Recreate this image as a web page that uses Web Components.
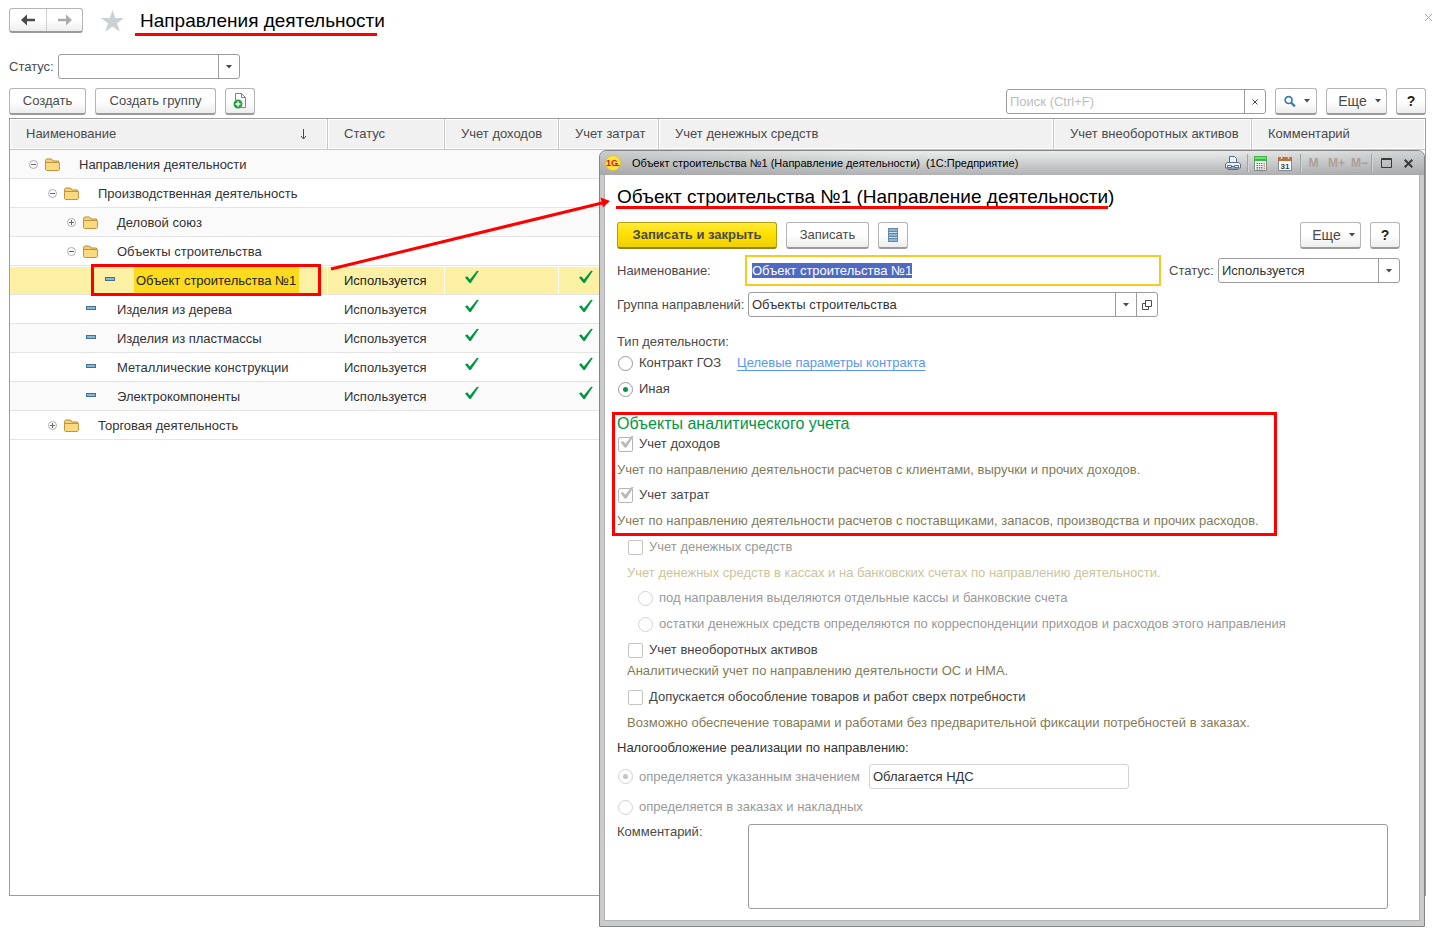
<!DOCTYPE html>
<html lang="ru">
<head>
<meta charset="utf-8">
<meta name="viewport" content="width=device-width, initial-scale=1">
<title>Направления деятельности</title>
<style>
  body { margin: 0; background: #fff; color: #4a4a4a; font: 13px/16px "Liberation Sans", Arial, sans-serif; }
</style>
</head>
<body>
<activity-page></activity-page>

<script>
const BASE = `
  *, *::before, *::after { box-sizing: border-box; }
  button, input, select, textarea { font: inherit; color: inherit; margin: 0; }
  svg { display: block; }
`;

function define(name, render, ready) {
  customElements.define(name, class extends HTMLElement {
    connectedCallback() {
      if (this.shadowRoot) return;
      const root = this.attachShadow({ mode: 'open' });
      const template = document.createElement('template');
      template.innerHTML = `<style>${BASE}</style>` + render(this);
      root.append(template.content.cloneNode(true));
      if (ready) ready(this, root);
    }
  });
}

const CARET = '<svg class="caret" width="6" height="4" viewBox="0 0 6 4"><path d="M0 0h6L3 3.5z" fill="#4a4a4a"/></svg>';

/* Push button: plain, primary (yellow), square icon or drop-down menu */
define('ui-button', el => `
  <style>
    :host { display: block; flex: none; }
    button {
      display: flex; align-items: center; justify-content: center; gap: 8px;
      height: 27px; min-width: 30px; width: 100%; padding: 0 12px;
      border: 1px solid #b4b4b4; border-bottom: 2px solid #9a9a9a; border-radius: 3px;
      background: linear-gradient(#fff 50%, #ededed); white-space: nowrap;
    }
    .caret { flex: none; }
    :host([primary]) button {
      background: linear-gradient(#ffea3d, #ffe000 45%, #efd000); border-color: #b39d10 #b39d10 #93820f;
      font-weight: bold;
    }
    :host([square]) button { padding: 0; width: 30px; }
    :host([menu]) button { padding: 0 6px 0 12px; }
    :host([menu]:not([icon])) button { font-size: 14px; }
    :host([icon]) button { padding: 0 6px 0 8px; width: 42px; }
    :host([help]) button { font-size: 14px; font-weight: bold; color: #222; }
  </style>
  <button type="button" aria-label="${el.getAttribute('name') || ''}"><slot></slot>${el.hasAttribute('menu') ? CARET : ''}</button>
`, (el, root) => { if (!el.hasAttribute('name')) root.querySelector('button').removeAttribute('aria-label'); });

/* Labelled drop-down list, optionally with an "open" button */
define('ui-select', el => `
  <style>
    :host { display: flex; align-items: center; }
    label { flex: none; width: var(--label, 49px); white-space: nowrap; }
    .box { flex: 1; min-width: 0; display: flex; height: 25px; border: 1px solid #9c9c9c; border-radius: 3px; background: #fff; position: relative; }
    select { flex: 1; min-width: 0; appearance: none; border: 0; background: none; padding: 0 24px 0 3px; color: #333; outline: 0; }
    .arrow { position: absolute; top: 0; bottom: 0; right: ${el.hasAttribute('openable') ? 21 : 0}px; width: 21px; border-left: 1px solid #9c9c9c; display: grid; place-items: center; pointer-events: none; }
    button { flex: none; width: 21px; border: 0; border-left: 1px solid #9c9c9c; background: none; padding: 0; display: grid; place-items: center; }
  </style>
  <label for="s">${el.getAttribute('label')}</label>
  <div class="box">
    <select id="s"><option>${el.getAttribute('value') || ''}</option></select>
    <span class="arrow">${CARET}</span>
    ${el.hasAttribute('openable') ? `<button type="button" aria-label="Открыть"><svg width="10" height="10" viewBox="0 0 10 10" fill="none" stroke="#4a4a4a"><path d="M3.500 .5h6v6h-6zM3.500 3.500h-3v6h6v-3"/></svg></button>` : ''}
  </div>
`);

/* Labelled text box; "current" gives it the yellow frame and selects its text */
define('ui-field', el => `
  <style>
    :host { display: flex; align-items: center; }
    label { flex: none; width: var(--label, 131px); white-space: nowrap; }
    input { flex: 1; min-width: 0; height: 25px; border: 1px solid #9c9c9c; border-radius: 3px; padding: 0 3px; background: #fff; color: #333; outline: 0; }
    :host([current]) input { border-color: #fff; border-radius: 0; outline: 2px solid #f9c922; outline-offset: 1px; }
    :host([readonly]) input { border-color: #d2d2d2; }
    input::selection { background: #5069c3; color: #fff; }
  </style>
  ${el.hasAttribute('label') ? `<label for="f">${el.getAttribute('label')}</label>` : ''}
  <input id="f" type="text" value="${el.getAttribute('value') || ''}" ${el.hasAttribute('readonly') ? 'readonly aria-label="Значение"' : ''}>
`, (el, root) => {
  if (el.hasAttribute('current')) { const i = root.querySelector('input'); i.focus(); i.select(); }
});

/* Search box with a clear button */
define('ui-search', () => `
  <style>
    :host { display: flex; width: 260px; height: 25px; border: 1px solid #9c9c9c; border-radius: 3px; background: #fff; box-sizing: border-box; }
    input { flex: 1; min-width: 0; border: 0; background: none; padding: 0 3px; outline: 0; }
    input::placeholder { color: #bdbdbd; opacity: 1; }
    button { width: 21px; border: 0; border-left: 1px solid #9c9c9c; background: none; padding: 0; display: grid; place-items: center; }
  </style>
  <input type="text" placeholder="Поиск (Ctrl+F)" aria-label="Поиск">
  <button type="button" aria-label="Очистить"><svg width="6" height="6" viewBox="0 0 6 6" stroke="#4a4a4a"><path d="M.5.5l5 5M5.500.5l-5 5"/></svg></button>
`);

/* Tick box or radio button with its label */
define('ui-choice', el => `
  <style>
    :host { display: block; height: 22px; }
    label { display: inline-flex; align-items: center; gap: 6px; height: 22px; padding-left: 1px; white-space: nowrap; color: #444; }
    input { appearance: none; flex: none; width: 15px; height: 15px; border: 1px solid #c4c4c4; border-radius: 2px; background: #fff; display: grid; place-items: center; position: relative; opacity: 1; }
    input[type=radio] { border-radius: 50%; border-color: #999; }
    input[type=radio]:checked::before { content: ""; width: 5px; height: 5px; border-radius: 50%; background: #009646; }
    input[type=checkbox]:checked { border-color: #b5b5b5; }
    input[type=checkbox]:checked::before {
      content: ""; position: absolute; left: 1px; top: -2px; width: 14px; height: 13px; background: #b9b9b9;
      clip-path: polygon(4% 50%, 22% 42%, 38% 64%, 84% 2%, 100% 0, 46% 92%, 32% 92%);
    }
    :host([off]) label { color: #999; }
    :host([off]) input[type=radio] { border-color: #d2d2d2; }
    :host([off]) input[type=radio]:checked::before { background: #c4c4c4; }
  </style>
  <label><input type="${el.getAttribute('type')}" ${el.hasAttribute('checked') ? 'checked' : ''} ${el.hasAttribute('off') ? 'disabled' : ''}><slot></slot></label>
`);

/* Grey-brown hint under an option */
define('ui-hint', () => `
  <style>
    :host { display: block; line-height: 29px; color: #837b58; white-space: nowrap; }
    :host([faint]) { color: #cbc49c; }
    :host([tight]) { line-height: 20px; margin-bottom: 5px; }
  </style><slot></slot>
`);

/* Top line: history buttons, star, page title */
define('page-header', () => `
  <style>
    :host { display: flex; align-items: flex-start; height: 46px; margin-right: -7px; }
    .nav { display: flex; height: 25px; border: 1px solid #b4b4b4; border-bottom: 2px solid #9a9a9a; border-radius: 3px; background: linear-gradient(#fff 50%, #ededed); }
    .nav button { width: 36px; border: 0; background: none; padding: 0; display: grid; place-items: center; }
    .nav button + button { border-left: 1px solid #cfcfcf; }
    .star { margin: 2px 16px 0 18px; border: 0; background: none; padding: 0; }
    h1 { margin: 0; font-size: 19px; line-height: 26px; font-weight: normal; color: #000; position: relative; white-space: nowrap; }
    h1::after { content: ""; position: absolute; left: -5px; right: 8px; bottom: -2px; height: 3px; background: #f00; }
    .close { margin: 5px 0 0 auto; border: 0; background: none; padding: 0; }
  </style>
  <div class="nav">
    <button type="button" aria-label="Назад"><svg width="14" height="12" viewBox="0 0 14 12"><path d="M0 6l6-5.500v4.200h8v2.600H6v4.200z" fill="#4a4a4a"/></svg></button>
    <button type="button" aria-label="Вперед"><svg width="14" height="12" viewBox="0 0 14 12"><path d="M14 6L8 .5v4.200H0v2.600h8v4.200z" fill="#ababab"/></svg></button>
  </div>
  <button type="button" class="star" aria-label="Избранное"><svg width="23" height="22" viewBox="0 0 23 22"><path d="M11.500 0l2.800 8H23l-7 5.200 2.700 8.500-7.200-5.200-7.200 5.200L7 13.200 0 8h8.700z" fill="#cdd0d3"/></svg></button>
  <h1>Направления деятельности</h1>
  <button type="button" class="close" aria-label="Закрыть"><svg width="9" height="9" viewBox="0 0 9 9" stroke="#aaa"><path d="M1 1l7 7M8 1L1 8"/></svg></button>
`);

define('page-toolbar', () => `
  <style>
    :host { display: flex; gap: 9px; margin: 9px 0 3px; }
    ui-search { margin-left: auto; align-self: center; }
    .w1 { width: 77px; } .w2 { width: 121px; } .w3 { width: 61px; }
  </style>
  <ui-button class="w1">Создать</ui-button>
  <ui-button class="w2">Создать группу</ui-button>
  <ui-button square name="Создать копированием"><svg width="14" height="16" viewBox="0 0 14 16"><path d="M2.500 7V.5h6l4 4v10H8M8.500.5v4h4" fill="#fff" stroke="#75849a"/><circle cx="5" cy="11" r="4.500" fill="#28a03c"/><path d="M5 8.500v5M2.500 11h5" stroke="#fff" stroke-width="1.500"/></svg></ui-button>
  <ui-search></ui-search>
  <ui-button menu icon name="Найти"><svg width="13" height="13" viewBox="0 0 13 13" fill="none" stroke="#3579b1"><circle cx="5" cy="5" r="3.700" stroke-width="1.800"/><path d="M7.800 7.800l4 4" stroke-width="2.400"/></svg></ui-button>
  <ui-button menu class="w3">Еще</ui-button>
  <ui-button square help>?</ui-button>
`);

/* Tree table of business activities */
const ROWS = [
  [1, 'minus', 'Направления деятельности'],
  [2, 'minus', 'Производственная деятельность'],
  [3, 'plus', 'Деловой союз'],
  [3, 'minus', 'Объекты строительства'],
  [4, 'leaf', 'Объект строительства №1', true],
  [3, 'leaf', 'Изделия из дерева'],
  [3, 'leaf', 'Изделия из пластмассы'],
  [3, 'leaf', 'Металлические конструкции'],
  [3, 'leaf', 'Электрокомпоненты'],
  [2, 'plus', 'Торговая деятельность'],
];
const TICK = '<svg width="14" height="14" viewBox="0 0 14 14" role="img" aria-label="Да"><path d="M0 7.500l2.200-1.300 2.700 3.300L12 .8l1.800.2L5.800 13H4.500z" fill="#00963f"/></svg>';
const FOLDER = '<svg class="folder" width="15" height="13" viewBox="0 0 15 13"><path d="M.5 11.500v-9l1-1.500h5l1.500 2h5.500v8.500z" fill="#f3d273" stroke="#b98d35"/><path d="M.5 4.500h13.900v7l-1 1h-12l-.9-1z" fill="#f9da80" stroke="#c1933c"/></svg>';
const toggle = kind => `<button type="button" aria-label="${kind === 'plus' ? 'Развернуть' : 'Свернуть'}"><svg width="9" height="9" viewBox="0 0 9 9" fill="none"><circle cx="4.500" cy="4.500" r="4" stroke="#adadad"/><path d="M2 4.500h5${kind === 'plus' ? 'M4.500 2v5' : ''}" stroke="#666"/></svg></button>`;

define('activity-grid', () => `
  <style>
    :host { display: block; }
    table { width: 100%; border-collapse: separate; border-spacing: 0; table-layout: fixed; }
    th { height: 31px; padding: 0 16px; background: #f1f1f1; border-right: 1px solid #c6c6c6; border-bottom: 1px solid #c6c6c6; box-shadow: inset 0 0 0 1px #fff; text-align: left; font-weight: normal; white-space: nowrap; }
    th:last-child { border-right: 0; }
    th:first-child { padding-right: 20px; }
    .sorted { display: flex; justify-content: space-between; align-items: center; }
    td { height: 29px; padding: 2px 16px 0; border-bottom: 1px solid #e4e4e4; color: #333; white-space: nowrap; }
    tr:nth-child(odd) td { background: #fafafa; }
    td svg[role] { margin-top: -8px; }
    td:nth-child(n+3) { padding-left: 20px; }
    td:first-child { padding: 0 0 0 calc(19px + 19px * var(--n)); }
    .c1 { width: 318px; } .c2 { width: 117px; } .c3 { width: 114px; } .c4 { width: 100px; } .c5 { width: 395px; } .c6 { width: 198px; }
    .node { display: flex; align-items: center; height: 28px; position: relative; }
    .node button, .gap { flex: none; width: 9px; height: 10px; border: 0; background: none; padding: 0; margin-right: 7px; }
    .folder { flex: none; margin-right: 19px; }
    .dash { flex: none; width: 10px; height: 4px; border: 1px solid #44708f; background: #86b6d8; margin: 0 21px 2px 3px; }
    .name { line-height: 26px; padding-top: 1px; }
    tr.on td { background: #fcf0a5; box-shadow: inset -1px 0 #fff, inset 0 1px #fff; color: #222; }
    .on .name { background: #fcdb1f; padding: 1px 3px 0 2px; margin-left: -2px; }
    .on .node::after { content: ""; position: absolute; left: 5px; top: -2px; width: 230px; height: 32px; border: 3px solid #f00; }
  </style>
  <table>
    <colgroup><col class="c1"><col class="c2"><col class="c3"><col class="c4"><col class="c5"><col class="c6"><col></colgroup>
    <thead><tr>
      <th><span class="sorted">Наименование <svg width="7" height="11" viewBox="0 0 7 11" fill="none" stroke="#4a4a4a"><path d="M3.500 0v10M1 7l2.500 3L6 7"/></svg></span></th>
      <th>Статус</th><th>Учет доходов</th><th>Учет затрат</th><th>Учет денежных средств</th><th>Учет внеоборотных активов</th><th>Комментарий</th>
    </tr></thead>
    <tbody>${ROWS.map(([n, kind, name, on]) => `
      <tr class="${on ? 'on' : ''}">
        <td style="--n:${n - 1}"><div class="node">${kind === 'leaf' ? '<span class="gap"></span><span class="dash"></span>' : toggle(kind) + FOLDER}<span class="name">${name}</span></div></td>
        ${kind === 'leaf' ? `<td>Используется</td><td>${TICK}</td><td>${TICK}</td>` : '<td></td><td></td><td></td>'}<td></td><td></td><td></td>
      </tr>`).join('')}
    </tbody>
  </table>
`);

/* Window frame with caption and system buttons */
define('app-window', el => `
  <style>
    :host { display: block; border: 1px solid #858585; border-radius: 7px 7px 0 0; background: #cacbcc; padding: 0 5px 5px; }
    header {
      display: flex; align-items: center; height: 24px; margin: 0 -5px; padding: 0 10px 0 5px; border-radius: 6px 6px 0 0; color: #000;
      background: linear-gradient(90deg, #9a9b9d66, #fff0 35%, #fff0 75%, #9a9b9d55), linear-gradient(#ececec, #b0b1b3);
    }
    h2 { flex: 1; margin: 0 0 0 11px; font-size: 11px; line-height: 16px; font-weight: normal; white-space: pre; }
    .tools { display: flex; align-items: center; height: 20px; }
    button { border: 0; background: none; padding: 0; display: grid; place-items: center; height: 18px; font-size: 12px; font-weight: bold; color: #ada099; white-space: nowrap; }
    .sep { width: 2px; height: 18px; background: #a2a3a5; border-right: 1px solid #d4d4d4; }
    .body { background: #fff; border: 1px solid #b3b4b6; border-width: 0 1px 1px; margin: 0 -1px; }
    .print { width: 16px; margin-right: 6px; } .calc { width: 13px; margin: 0 11px 0 5px; } .cal { width: 14px; margin-right: 8px; }
    .m { width: 23px; } .max { width: 11px; margin: 0 11px 0 8px; } .x { width: 11px; }
  </style>
  <header>
    <svg width="16" height="16" viewBox="0 0 16 16"><circle cx="8" cy="8" r="7.500" fill="#ffe43d" stroke="#e3c43a"/><text x="1" y="11" font-family="Liberation Sans, Arial, sans-serif" font-size="9" font-weight="bold" fill="#d8141c">1С</text><path d="M9.500 10.500h5M10 8.500h3" stroke="#d8141c"/></svg>
    <h2>${el.getAttribute('caption')}</h2>
    <div class="tools">
      <button type="button" class="print" aria-label="Печать"><svg width="16" height="15" viewBox="0 0 16 15" fill="#eef2f6" stroke="#5b6f86"><path d="M4.500 7V.5h5l2 2V7"/><path d="M.5 12V8l2-1.500h11l2 1.500v4z"/><path d="M2.500 9.500h4v2h-4zM9.500 9.500h4v2h-4zM6.500 10.500h3M2.500 13.500h11"/></svg></button>
      <span class="sep"></span>
      <button type="button" class="calc" aria-label="Калькулятор"><svg width="13" height="15" viewBox="0 0 13 15"><path d="M.5.5h12v14H.5z" fill="#f6f6f6" stroke="#7b8a84"/><path d="M0 0h13v5H0z" fill="#3fb64a"/><path d="M1 1h11v2H1z" fill="#6ee06e"/><path d="M2.500 7.500h6M2.500 9.500h6M2.500 11.500h6M2.500 13h6" stroke="#61707a" stroke-dasharray="1.500 .8"/><path d="M10.200 7v6.500" stroke="#d0463b" stroke-dasharray="1.500 .8"/></svg></button>
      <button type="button" class="cal" aria-label="Календарь"><svg width="14" height="15" viewBox="0 0 14 15"><path d="M.5 1.500h13v13H.5z" fill="#fdfdfd" stroke="#7f8994"/><path d="M0 1h14v4H0z" fill="#bd6f3c"/><path d="M3.500 0v3M10.500 0v3" stroke="#e8cdb8" stroke-width="1.500"/><text x="2.500" y="12.500" font-family="Liberation Sans, Arial, sans-serif" font-size="8" fill="#333f4c">31</text></svg></button>
      <span class="sep"></span>
      <button type="button" class="m">M</button><button type="button" class="m">M+</button><button type="button" class="m">M−</button>
      <span class="sep"></span>
      <button type="button" class="max" aria-label="Развернуть окно"><svg width="11" height="10" viewBox="0 0 11 10" fill="none" stroke="#3a3a3a"><path d="M.5.5h10v9H.5zM1 1.500h9"/></svg></button>
      <button type="button" class="x" aria-label="Закрыть окно"><svg width="9" height="9" viewBox="0 0 9 9" stroke="#3a3a3a" stroke-width="2"><path d="M.7.7l7.600 7.600M8.300.7L.7 8.300"/></svg></button>
    </div>
  </header>
  <div class="body"><slot></slot></div>
`);

/* Form of one business activity */
define('activity-form', () => `
  <style>
    :host { display: block; padding: 9px 19px 11px 12px; }
    h1 { display: inline-block; position: relative; margin: 0; font-size: 19px; line-height: 26px; font-weight: normal; color: #000; white-space: nowrap; }
    h1::after { content: ""; position: absolute; left: -1px; right: 6px; bottom: 1px; height: 3px; background: #f00; }
    .bar { display: flex; gap: 9px; margin: 12px 0 9px; }
    .bar .right { margin-left: auto; }
    .w1 { width: 160px; } .w2 { width: 83px; } .w3 { width: 61px; }
    .row { display: flex; gap: 11px; }
    .row ui-field { flex: 1; }
    .row ui-select { width: 231px; }
    .group { --label: 131px; margin: 9px 242px 0 0; }
    .caption { line-height: 20px; margin-top: 15px; }
    .line { display: flex; gap: 16px; line-height: 22px; margin-bottom: 4px; }
    a { color: #5a97ef; text-underline-offset: 3px; }
    .marked { position: relative; margin-top: 14px; padding-bottom: 1px; }
    .marked::after { content: ""; position: absolute; left: -5px; top: -2px; width: 665px; bottom: 0; border: 3px solid #f00; pointer-events: none; }
    h2 { margin: 0; font-size: 16px; line-height: 19px; font-weight: normal; color: #009646; }
    .indent { padding-left: 10px; }
    .deep { padding-left: 10px; display: grid; gap: 4px; margin-bottom: 4px; }
    .tax { line-height: 20px; color: #333; margin-top: 1px; }
    .value { display: flex; align-items: center; gap: 9px; margin: 6px 0 7px; }
    .value ui-field { width: 260px; }
    .comment { display: flex; margin: 6px 12px 0 0; }
    .comment label { width: 131px; flex: none; }
    textarea { flex: 1; height: 85px; border: 1px solid #9c9c9c; border-radius: 3px; resize: none; background: #fff; }
  </style>
  <h1>Объект строительства №1 (Направление деятельности)</h1>
  <div class="bar">
    <ui-button primary class="w1">Записать и закрыть</ui-button>
    <ui-button class="w2">Записать</ui-button>
    <ui-button square name="Список"><svg width="10" height="14" viewBox="0 0 10 14"><path d="M0 0h10v14H0z" fill="#5f8aa9"/><path d="M1 2h8M1 4.500h8M1 7h8M1 9.500h8M1 12h8" stroke="#c9dceb" stroke-width="1.200"/></svg></ui-button>
    <ui-button menu class="right w3">Еще</ui-button>
    <ui-button square help>?</ui-button>
  </div>
  <div class="row">
    <ui-field current label="Наименование:" value="Объект строительства №1"></ui-field>
    <ui-select label="Статус:" value="Используется"></ui-select>
  </div>
  <ui-select class="group" openable label="Группа направлений:" value="Объекты строительства"></ui-select>
  <div class="caption">Тип деятельности:</div>
  <div class="line"><ui-choice type="radio">Контракт ГОЗ</ui-choice><a href="#">Целевые параметры контракта</a></div>
  <ui-choice type="radio" checked>Иная</ui-choice>
  <section class="marked">
    <h2>Объекты аналитического учета</h2>
    <ui-choice type="checkbox" checked>Учет доходов</ui-choice>
    <ui-hint>Учет по направлению деятельности расчетов с клиентами, выручки и прочих доходов.</ui-hint>
    <ui-choice type="checkbox" checked>Учет затрат</ui-choice>
    <ui-hint>Учет по направлению деятельности расчетов с поставщиками, запасов, производства и прочих расходов.</ui-hint>
  </section>
  <section class="indent">
    <ui-choice type="checkbox" off>Учет денежных средств</ui-choice>
    <ui-hint faint>Учет денежных средств в кассах и на банковских счетах по направлению деятельности.</ui-hint>
    <div class="deep">
      <ui-choice type="radio" off>под направления выделяются отдельные кассы и банковские счета</ui-choice>
      <ui-choice type="radio" off>остатки денежных средств определяются по корреспонденции приходов и расходов этого направления</ui-choice>
    </div>
    <ui-choice type="checkbox">Учет внеоборотных активов</ui-choice>
    <ui-hint tight>Аналитический учет по направлению деятельности ОС и НМА.</ui-hint>
    <ui-choice type="checkbox">Допускается обособление товаров и работ сверх потребности</ui-choice>
    <ui-hint>Возможно обеспечение товарами и работами без предварительной фиксации потребностей в заказах.</ui-hint>
  </section>
  <div class="tax">Налогообложение реализации по направлению:</div>
  <div class="value"><ui-choice type="radio" checked off>определяется указанным значением</ui-choice><ui-field readonly value="Облагается НДС"></ui-field></div>
  <ui-choice type="radio" off>определяется в заказах и накладных</ui-choice>
  <div class="comment"><label for="note">Комментарий:</label><textarea id="note"></textarea></div>
`);

define('activity-page', () => `
  <style>
    :host { display: flex; flex-direction: column; min-height: 100vh; padding: 8px 15px 33px 9px; box-sizing: border-box; }
    .filter { width: 231px; }
    .work { flex: 1; position: relative; border: 1px solid #9c9c9c; min-height: 778px; }
    app-window { position: absolute; left: 589px; right: 0; top: 31px; }
    .arrow { position: absolute; left: 320px; top: 77px; pointer-events: none; }
  </style>
  <page-header></page-header>
  <ui-select class="filter" label="Статус:"></ui-select>
  <page-toolbar></page-toolbar>
  <div class="work">
    <activity-grid></activity-grid>
    <app-window caption="Объект строительства №1 (Направление деятельности)  (1С:Предприятие)"><activity-form></activity-form></app-window>
    <svg class="arrow" width="282" height="76" viewBox="0 0 282 76"><path d="M1 73L272 7" stroke="#f00" stroke-width="3"/><path d="M280 5l-9.500-3.500 2.500 10z" fill="#f00"/></svg>
  </div>
`);
</script>
</body>
</html>
